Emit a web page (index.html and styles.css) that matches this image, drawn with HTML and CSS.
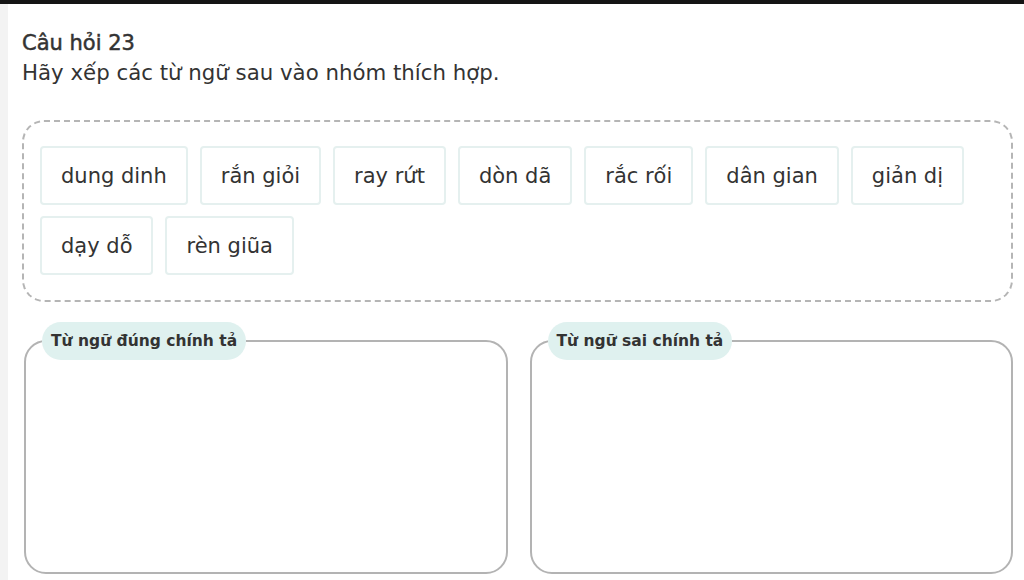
FILE: index.html
```html
<!DOCTYPE html>
<html>
<head>
	<title>Câu hỏi 23</title>
	<link rel="stylesheet" href="styles.css">
</head>
<body>
	<div class="page">
		<h2 class="question-title">Câu hỏi 23</h2>
		<p class="question-text">Hãy xếp các từ ngữ sau vào nhóm thích hợp.</p>

		<div class="word-bank">
			<span class="word">dung dinh</span>
			<span class="word">rắn giỏi</span>
			<span class="word">ray rứt</span>
			<span class="word">dòn dã</span>
			<span class="word">rắc rối</span>
			<span class="word">dân gian</span>
			<span class="word">giản dị</span>
			<span class="word">dạy dỗ</span>
			<span class="word">rèn giũa</span>
		</div>

		<div class="groups">
			<fieldset class="group">
				<legend class="group-label">Từ ngữ đúng chính tả</legend>
			</fieldset>
			<fieldset class="group">
				<legend class="group-label">Từ ngữ sai chính tả</legend>
			</fieldset>
		</div>
	</div>
</body>
</html>
```

FILE: styles.css
```css
html, body {
	margin: 0;
	height: 100%;
}
body {
	background-color: #fff;
	border-top: 4px solid #151515;
	box-sizing: border-box;
	font-family: "DejaVu Sans", Verdana, sans-serif;
	color: #333;
}
.page {
	border-left: 8px solid #f3f3f3;
	height: 100%;
	box-sizing: border-box;
	padding: 25px 11px 0 14px;
}
.question-title {
	margin: 0;
	font-size: 21px;
	font-weight: normal;
	line-height: 29px;
	-webkit-text-stroke: 0.5px #333;
}
.question-text {
	margin: 0;
	font-size: 21.3px;
	line-height: 29px;
}
.word-bank {
	margin-top: 33px;
	border: 2px dashed #b5b5b5;
	border-radius: 22px;
	padding: 24px 16px 25px 16px;
	display: flex;
	flex-wrap: wrap;
	gap: 11px 12px;
}
.word {
	border: 2px solid #e5f0ef;
	border-radius: 4px;
	padding: 0 19px;
	height: 59px;
	box-sizing: border-box;
	display: flex;
	align-items: center;
	font-size: 21px;
	color: #333;
}
.groups {
	display: grid;
	grid-template-columns: 1fr 1fr;
	gap: 22px;
	margin: 20px 0 0 2px;
}
.group {
	margin: 0;
	padding: 0 0 0 16px;
	height: 248px;
	border: 2px solid #b3b3b3;
	border-radius: 22px;
	min-width: 0;
}
.group-label {
	background-color: #dff1ef;
	border-radius: 19px;
	padding: 0 9px;
	line-height: 38px;
	font-size: 15.5px;
	font-weight: bold;
	color: #333;
}
```
